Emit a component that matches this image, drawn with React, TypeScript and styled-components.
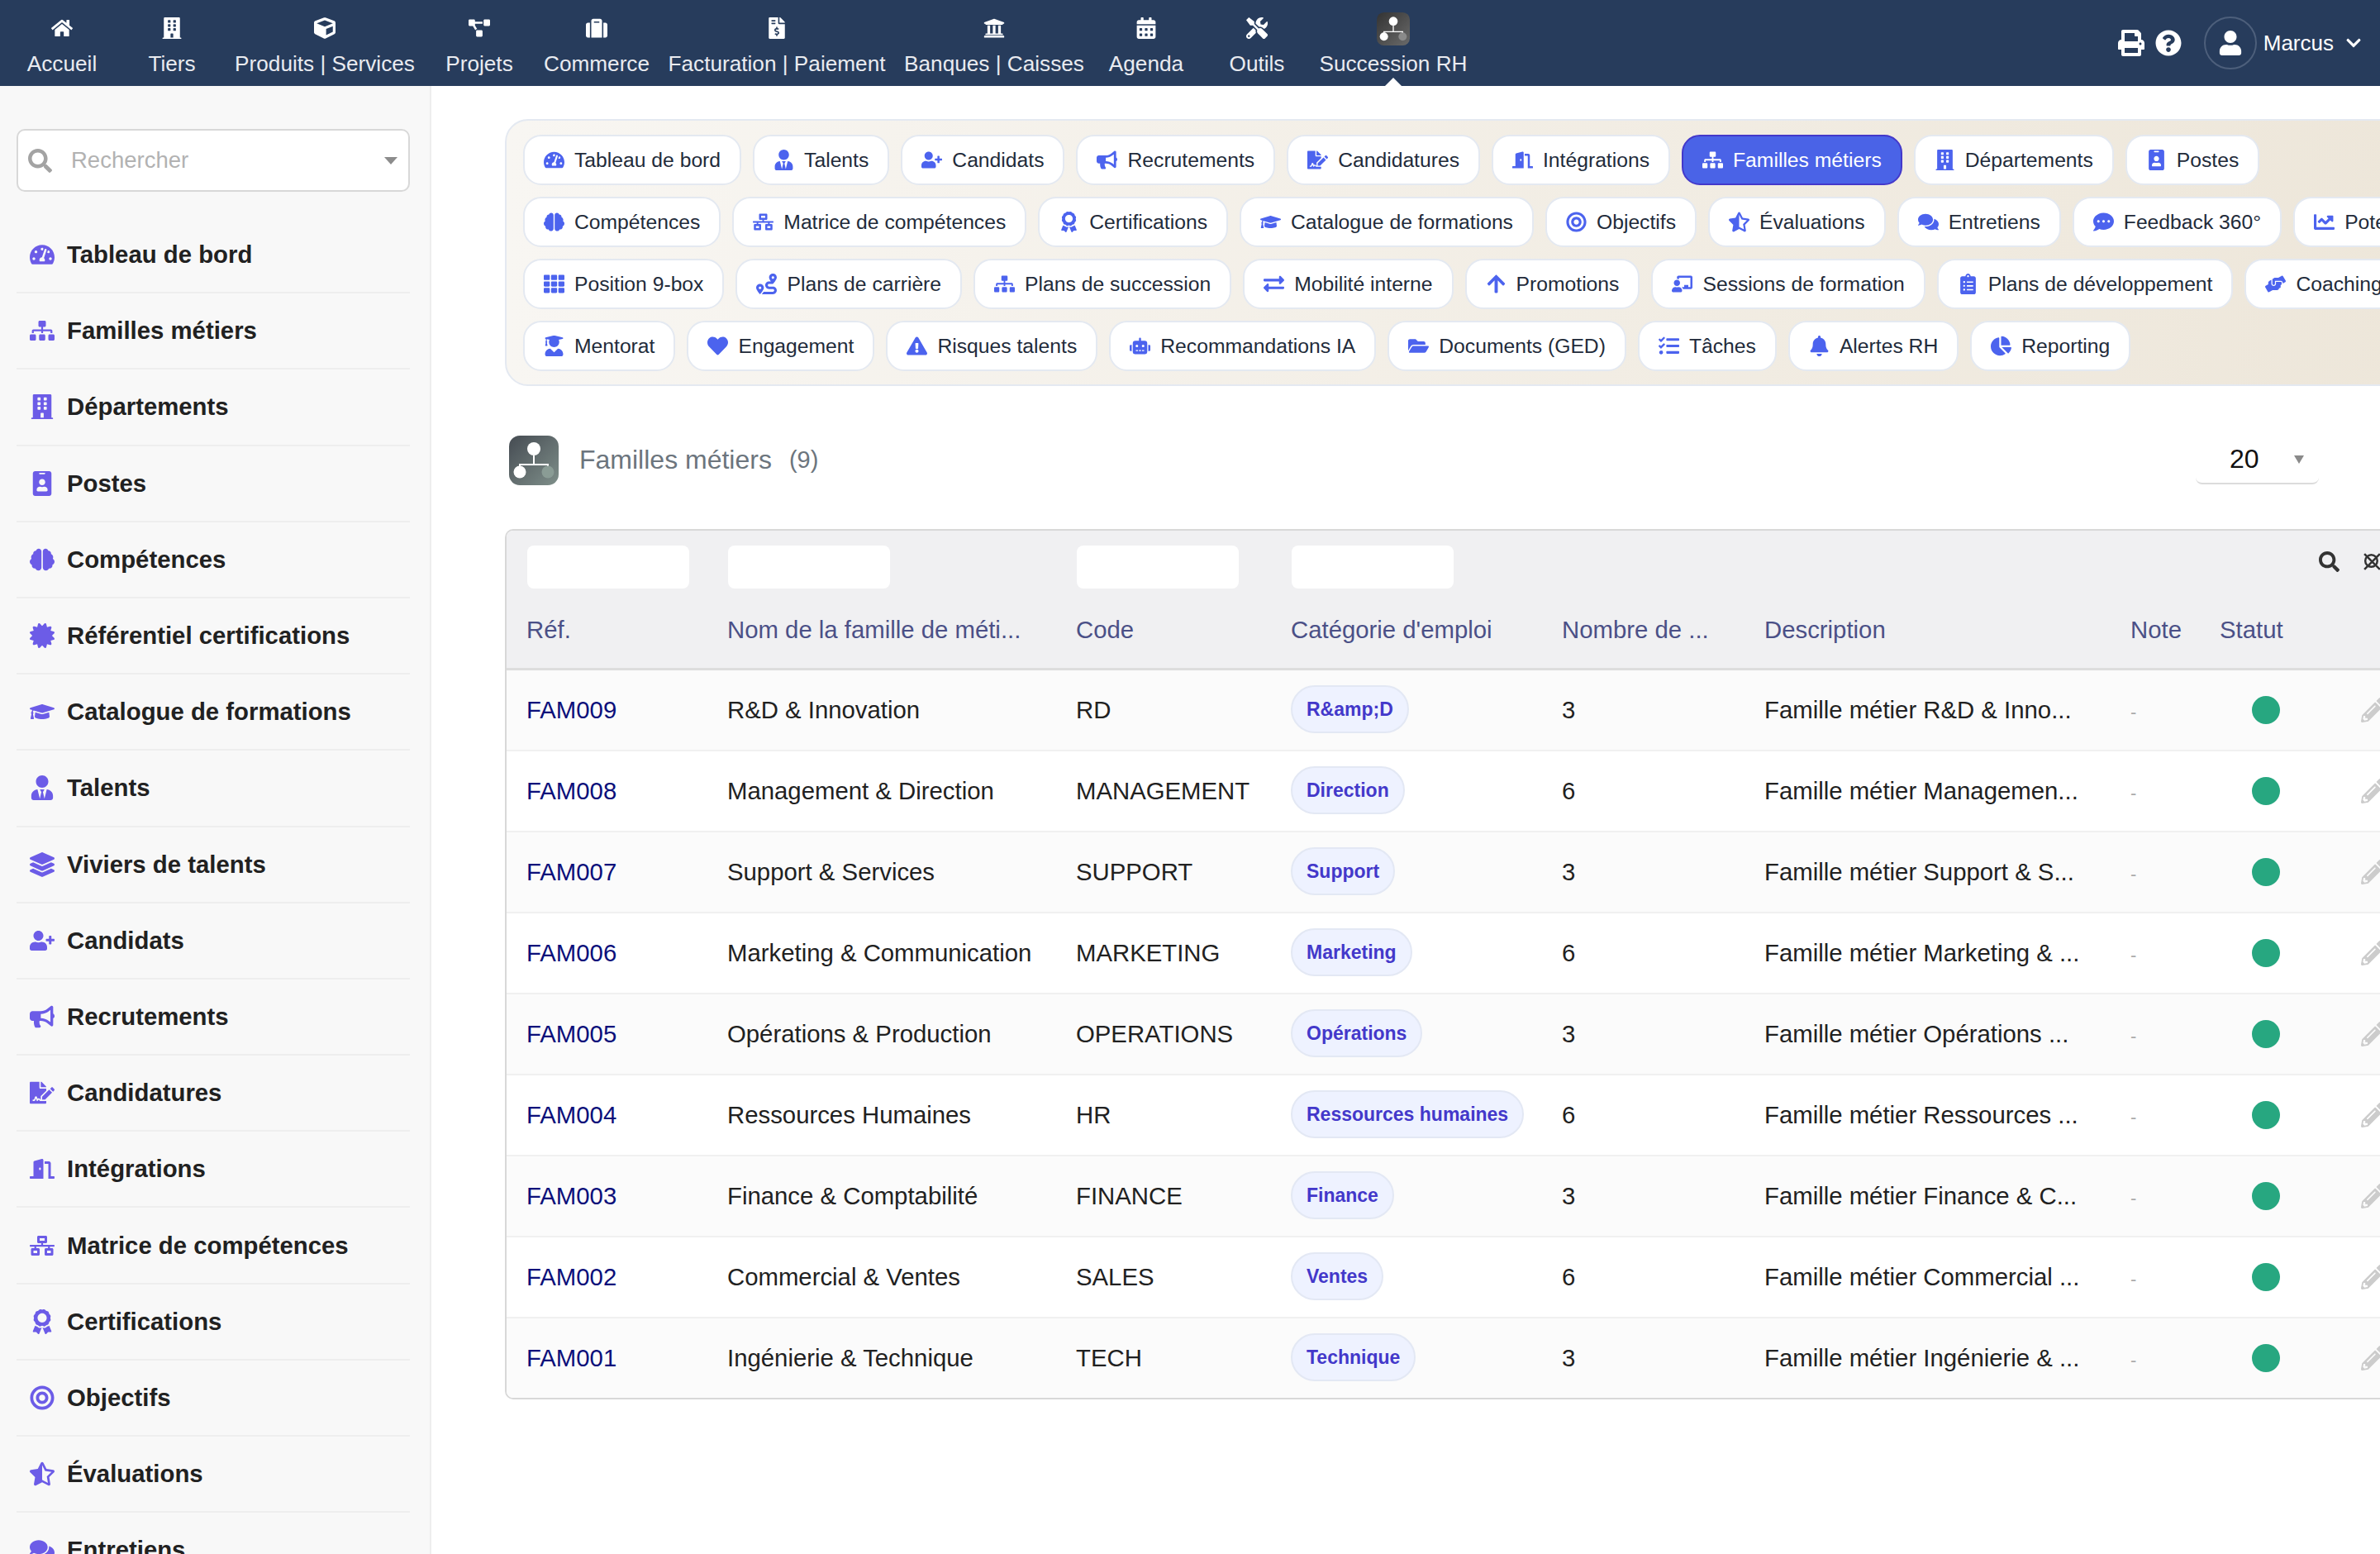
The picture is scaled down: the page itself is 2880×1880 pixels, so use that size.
import React from 'react'
import styled, { createGlobalStyle } from 'styled-components'
import {
  FaHome,
  FaBuilding,
  FaCube,
  FaProjectDiagram,
  FaSuitcase,
  FaFileInvoiceDollar,
  FaUniversity,
  FaCalendarAlt,
  FaTools,
  FaPrint,
  FaQuestionCircle,
  FaUser,
  FaChevronDown,
  FaSearch,
  FaTachometerAlt,
  FaSitemap,
  FaIdBadge,
  FaBrain,
  FaCertificate,
  FaGraduationCap,
  FaUserTie,
  FaLayerGroup,
  FaUserPlus,
  FaBullhorn,
  FaFileSignature,
  FaDoorOpen,
  FaNetworkWired,
  FaAward,
  FaBullseye,
  FaStarHalfAlt,
  FaComments,
  FaCommentDots,
  FaChartLine,
  FaTh,
  FaRoute,
  FaExchangeAlt,
  FaArrowUp,
  FaChalkboardTeacher,
  FaClipboardList,
  FaHandsHelping,
  FaUserGraduate,
  FaHeart,
  FaExclamationTriangle,
  FaRobot,
  FaFolderOpen,
  FaTasks,
  FaBell,
  FaChartPie,
  FaPencilAlt,
} from 'react-icons/fa'

const GlobalStyle = createGlobalStyle`
  html, body {
    margin: 0;
    padding: 0;
    width: 2880px;
    height: 1880px;
    overflow: hidden;
    background: #fff;
    font-family: 'Liberation Sans', Arial, sans-serif;
  }
  svg {
    display: block;
  }
`

const navItems = [
  { label: 'Accueil', icon: FaHome, w: 134 },
  { label: 'Tiers', icon: FaBuilding, w: 132 },
  { label: 'Produits | Services', icon: FaCube, w: 238 },
  { label: 'Projets', icon: FaProjectDiagram, w: 136 },
  { label: 'Commerce', icon: FaSuitcase, w: 148 },
  { label: 'Facturation | Paiement', icon: FaFileInvoiceDollar, w: 288 },
  { label: 'Banques | Caisses', icon: FaUniversity, w: 238 },
  { label: 'Agenda', icon: FaCalendarAlt, w: 130 },
  { label: 'Outils', icon: FaTools, w: 138 },
]

const sideItems = [
  { label: 'Tableau de bord', icon: FaTachometerAlt },
  { label: 'Familles métiers', icon: FaSitemap },
  { label: 'Départements', icon: FaBuilding },
  { label: 'Postes', icon: FaIdBadge },
  { label: 'Compétences', icon: FaBrain },
  { label: 'Référentiel certifications', icon: FaCertificate },
  { label: 'Catalogue de formations', icon: FaGraduationCap },
  { label: 'Talents', icon: FaUserTie },
  { label: 'Viviers de talents', icon: FaLayerGroup },
  { label: 'Candidats', icon: FaUserPlus },
  { label: 'Recrutements', icon: FaBullhorn },
  { label: 'Candidatures', icon: FaFileSignature },
  { label: 'Intégrations', icon: FaDoorOpen },
  { label: 'Matrice de compétences', icon: FaNetworkWired },
  { label: 'Certifications', icon: FaAward },
  { label: 'Objectifs', icon: FaBullseye },
  { label: 'Évaluations', icon: FaStarHalfAlt },
  { label: 'Entretiens', icon: FaComments },
]

const tabs = [
  { label: 'Tableau de bord', icon: FaTachometerAlt },
  { label: 'Talents', icon: FaUserTie },
  { label: 'Candidats', icon: FaUserPlus },
  { label: 'Recrutements', icon: FaBullhorn },
  { label: 'Candidatures', icon: FaFileSignature },
  { label: 'Intégrations', icon: FaDoorOpen },
  { label: 'Familles métiers', icon: FaSitemap, active: true },
  { label: 'Départements', icon: FaBuilding },
  { label: 'Postes', icon: FaIdBadge },
  { label: 'Compétences', icon: FaBrain },
  { label: 'Matrice de compétences', icon: FaNetworkWired },
  { label: 'Certifications', icon: FaAward },
  { label: 'Catalogue de formations', icon: FaGraduationCap },
  { label: 'Objectifs', icon: FaBullseye },
  { label: 'Évaluations', icon: FaStarHalfAlt },
  { label: 'Entretiens', icon: FaComments },
  { label: 'Feedback 360°', icon: FaCommentDots },
  { label: 'Potentiel', icon: FaChartLine },
  { label: 'Position 9-box', icon: FaTh },
  { label: 'Plans de carrière', icon: FaRoute },
  { label: 'Plans de succession', icon: FaSitemap },
  { label: 'Mobilité interne', icon: FaExchangeAlt },
  { label: 'Promotions', icon: FaArrowUp },
  { label: 'Sessions de formation', icon: FaChalkboardTeacher },
  { label: 'Plans de développement', icon: FaClipboardList },
  { label: 'Coaching', icon: FaHandsHelping },
  { label: 'Mentorat', icon: FaUserGraduate },
  { label: 'Engagement', icon: FaHeart },
  { label: 'Risques talents', icon: FaExclamationTriangle },
  { label: 'Recommandations IA', icon: FaRobot },
  { label: 'Documents (GED)', icon: FaFolderOpen },
  { label: 'Tâches', icon: FaTasks },
  { label: 'Alertes RH', icon: FaBell },
  { label: 'Reporting', icon: FaChartPie },
]

const rows = [
  ['FAM009', 'R&D & Innovation', 'RD', 'R&amp;D', '3', 'Famille métier R&D & Inno...'],
  ['FAM008', 'Management & Direction', 'MANAGEMENT', 'Direction', '6', 'Famille métier Managemen...'],
  ['FAM007', 'Support & Services', 'SUPPORT', 'Support', '3', 'Famille métier Support & S...'],
  ['FAM006', 'Marketing & Communication', 'MARKETING', 'Marketing', '6', 'Famille métier Marketing & ...'],
  ['FAM005', 'Opérations & Production', 'OPERATIONS', 'Opérations', '3', 'Famille métier Opérations ...'],
  ['FAM004', 'Ressources Humaines', 'HR', 'Ressources humaines', '6', 'Famille métier Ressources ...'],
  ['FAM003', 'Finance & Comptabilité', 'FINANCE', 'Finance', '3', 'Famille métier Finance & C...'],
  ['FAM002', 'Commercial & Ventes', 'SALES', 'Ventes', '6', 'Famille métier Commercial ...'],
  ['FAM001', 'Ingénierie & Technique', 'TECH', 'Technique', '3', 'Famille métier Ingénierie & ...'],
]

const colWidths = [243, 422, 260, 328, 245, 443, 108, 126, 193]

const Page = styled.div`
  width: 2880px;
  height: 1880px;
  display: flex;
  flex-direction: column;
  overflow: hidden;
`

const TopBar = styled.header`
  height: 104px;
  flex: none;
  background: #273c5c;
  display: flex;
  justify-content: space-between;
  padding-left: 8px;
  color: #e9ebf0;
`

const NavList = styled.nav`
  display: flex;
`

const NavItem = styled.a<{ $w: number }>`
  position: relative;
  width: ${p => p.$w}px;
  display: flex;
  flex-direction: column;
  align-items: center;
  font-size: 26.2px;
  white-space: nowrap;
  svg {
    height: 26px;
    width: auto;
    margin-top: 21px;
    margin-bottom: 15px;
    color: #fff;
  }
`

const ActiveNav = styled(NavItem)`
  svg {
    height: 40px;
    margin-top: 15px;
    margin-bottom: 7px;
    color: inherit;
  }
  &::after {
    content: '';
    position: absolute;
    left: 50%;
    bottom: 0;
    margin-left: -10px;
    border-left: 10px solid transparent;
    border-right: 10px solid transparent;
    border-bottom: 10px solid #fff;
  }
`

const TopRight = styled.div`
  display: flex;
  align-items: center;
  padding-right: 22px;
  color: #fff;
`

const TopIcon = styled.span`
  font-size: 32px;
  margin-right: 13px;
  svg {
    height: 1em;
    width: auto;
  }
`

const Avatar = styled.span`
  width: 64px;
  height: 64px;
  box-sizing: border-box;
  border: 2px solid #4d5f7b;
  border-radius: 50%;
  margin-left: 14px;
  display: flex;
  align-items: center;
  justify-content: center;
  font-size: 30px;
`

const UserName = styled.span`
  font-size: 26px;
  margin-left: 8px;
  margin-right: 14px;
`

const Body = styled.div`
  flex: 1;
  display: flex;
  min-height: 0;
`

const Sidebar = styled.aside`
  width: 520px;
  flex: none;
  box-sizing: content-box;
  background: #f8f8f8;
  border-right: 2px solid #eeeeee;
  padding: 52px 0 0;
  overflow: hidden;
`

const SearchBox = styled.div`
  margin: 0 24px 0 20px;
  height: 76px;
  box-sizing: border-box;
  background: #fff;
  border: 2px solid #d8d8d8;
  border-radius: 10px;
  display: flex;
  align-items: center;
  padding: 0 13px 0 12px;
  color: #a3a3a3;
  font-size: 27.5px;
  svg {
    font-size: 29px;
    margin-right: 23px;
  }
`

const Placeholder = styled.span`
  flex: 1;
  color: #b2b2b2;
`

const Caret = styled.span`
  border-left: 8px solid transparent;
  border-right: 8px solid transparent;
  border-top: 9px solid #8c8c8c;
`

const SideList = styled.ul`
  list-style: none;
  margin: 31px 24px 0 20px;
  padding: 0;
`

const SideRow = styled.li`
  height: 92.2px;
  box-sizing: border-box;
  border-bottom: 2px solid #eeeeee;
  display: flex;
  align-items: center;
  padding-left: 16px;
  font-size: 29.33px;
  font-weight: 700;
  color: #212121;
`

const SideIcon = styled.span`
  width: 45px;
  flex: none;
  font-size: 30px;
  color: #6c5ce7;
  svg {
    height: 1em;
    width: auto;
  }
`

const Main = styled.main`
  flex: 1;
  min-width: 0;
  overflow: hidden;
  padding: 40px 0 0 89px;
`

const Content = styled.div`
  width: 2370px;
`

const TabPanel = styled.div`
  box-sizing: border-box;
  height: 323px;
  border: 2px solid #e4e9f1;
  border-radius: 28px;
  background: linear-gradient(90deg, #f8f6f2 0%, #ede6d9 100%);
  padding: 17px 20px;
  display: flex;
  flex-wrap: wrap;
  align-content: flex-start;
  gap: 14px;
`

const Tab = styled.a<{ $active?: boolean }>`
  height: 61px;
  box-sizing: border-box;
  display: flex;
  align-items: center;
  gap: 12px;
  padding: 0 23px;
  border: 2px solid ${p => (p.$active ? '#4338ca' : '#e4e9f1')};
  border-radius: 22px;
  background: ${p => (p.$active ? '#4a63e7' : '#fff')};
  color: ${p => (p.$active ? '#fff' : '#222b3a')};
  font-size: 24.7px;
  white-space: nowrap;
  svg {
    height: 25px;
    width: auto;
    color: ${p => (p.$active ? '#fff' : '#4c63ee')};
  }
`

const Heading = styled.div`
  display: flex;
  justify-content: space-between;
  align-items: center;
  margin: 59px 175px 53px 5px;
  height: 61px;
`

const TitleGroup = styled.div`
  display: flex;
  align-items: center;
  color: #6c757d;
`

const Title = styled.h1`
  margin: 0 21px 0 25px;
  font-size: 32px;
  font-weight: 400;
`

const Count = styled.span`
  font-size: 29px;
`

const PageSize = styled.div`
  width: 149px;
  height: 58px;
  box-sizing: border-box;
  border-bottom: 2px solid #dcdcdc;
  border-radius: 0 0 8px 8px;
  display: flex;
  align-items: center;
  padding: 0 18px 0 41px;
  justify-content: space-between;
  font-size: 32px;
  color: #111;
`

const SmallCaret = styled.span`
  border-left: 6px solid transparent;
  border-right: 6px solid transparent;
  border-top: 10px solid #8a8a8a;
`

const TableFrame = styled.div`
  box-sizing: border-box;
  border: 2px solid #d8d8d8;
  border-right: 0;
  border-radius: 10px 0 0 10px;
  overflow: hidden;
`

const DataTable = styled.table`
  width: 2368px;
  table-layout: fixed;
  border-collapse: separate;
  border-spacing: 0;
  font-size: 29.33px;
  color: #212121;
`

const HeadRow = styled.tr`
  background: #f0f0f2;
`

const FilterCell = styled.td`
  height: 78px;
  padding: 18px 0 0 25px;
  box-sizing: border-box;
  vertical-align: top;
`

const FilterInput = styled.input`
  display: block;
  width: 196px;
  height: 52px;
  box-sizing: border-box;
  border: 0;
  border-radius: 8px;
  background: #fff;
  padding: 0;
`

const ToolCell = styled.td`
  padding: 25px 0 0 18px;
  vertical-align: top;
  color: #333;
`

const ToolIcons = styled.div`
  display: flex;
  gap: 27px;
  font-size: 25px;
`

const HeadCell = styled.th`
  height: 91px;
  box-sizing: border-box;
  border-bottom: 3px solid #dddddd;
  padding: 0 0 4px 24px;
  text-align: left;
  font-weight: 400;
  color: #4b5087;
  white-space: nowrap;
`

const BodyRow = styled.tr`
  background: #fbfbfb;
  &:nth-child(even) {
    background: #fff;
  }
  &:last-child td {
    border-bottom: 0;
    height: 96px;
  }
`

const Cell = styled.td`
  height: 98px;
  box-sizing: border-box;
  border-bottom: 2px solid #f0f0f0;
  padding: 0 0 0 24px;
  white-space: nowrap;
`

const RefLink = styled.a`
  color: #0b0f7a;
`

const Badge = styled.span`
  display: inline-flex;
  align-items: center;
  height: 58px;
  box-sizing: border-box;
  padding: 0 17px;
  border: 2px solid #e3e8f4;
  border-radius: 29px;
  background: #eef2ff;
  color: #4338ca;
  font-size: 23px;
  font-weight: 700;
  position: relative;
  top: -1px;
`

const Dash = styled.span`
  color: #aaaaaa;
  font-size: 22px;
`

const StatusDot = styled.span`
  display: block;
  width: 34px;
  height: 34px;
  border-radius: 50%;
  background: #27a780;
  margin-left: 39px;
`

const EditIcon = styled.span`
  display: block;
  margin-left: 45px;
  font-size: 30px;
  color: #cccccc;
`

const TEAL_GRADIENT = (id: string, from: string, to: string) => (
  <linearGradient id={id} x1='0' y1='0' x2='1' y2='1'>
    <stop offset='0' stopColor={from} />
    <stop offset='1' stopColor={to} />
  </linearGradient>
)

const OrgBadge = ({ id, from, to, last }: { id: string; from: string; to: string; last: string }) => (
  <svg viewBox='0 0 60 60' width='60' height='60'>
    <defs>{TEAL_GRADIENT(id, from, to)}</defs>
    <rect width='60' height='60' rx='13' fill={`url(#${id})`} />
    <circle cx='30' cy='16' r='8' fill='#fff' />
    <path d='M30 24v11M13 44v-9h34v9' fill='none' stroke='#fff' strokeWidth='2' />
    <circle cx='13' cy='44' r='7.5' fill='#fff' />
    <circle cx='47' cy='44' r='7.5' fill={last} />
  </svg>
)

const ClearFilterIcon = () => (
  <svg viewBox='0 0 24 24' width='25' height='25' fill='none' stroke='#333' strokeWidth='2.4'>
    <circle cx='11' cy='11' r='7' />
    <path d='M3 3l18 18M21 3L3 21' />
  </svg>
)

const App = () => {
  return (
    <Page>
      <GlobalStyle />
      <TopBar>
        <NavList>
          {navItems.map(item => {
            const Icon = item.icon
            return (
              <NavItem key={item.label} $w={item.w}>
                <Icon />
                {item.label}
              </NavItem>
            )
          })}
          <ActiveNav $w={192}>
            <OrgBadge id='nav-badge' from='#333333' to='#6a6a6a' last='#8a8a8a' />
            Succession RH
          </ActiveNav>
        </NavList>
        <TopRight>
          <TopIcon>
            <FaPrint />
          </TopIcon>
          <TopIcon>
            <FaQuestionCircle />
          </TopIcon>
          <Avatar>
            <FaUser />
          </Avatar>
          <UserName>Marcus</UserName>
          <FaChevronDown size={20} />
        </TopRight>
      </TopBar>
      <Body>
        <Sidebar>
          <SearchBox>
            <FaSearch />
            <Placeholder>Rechercher</Placeholder>
            <Caret />
          </SearchBox>
          <SideList>
            {sideItems.map(item => {
              const Icon = item.icon
              return (
                <SideRow key={item.label}>
                  <SideIcon>
                    <Icon />
                  </SideIcon>
                  {item.label}
                </SideRow>
              )
            })}
          </SideList>
        </Sidebar>
        <Main>
          <Content>
            <TabPanel>
              {tabs.map(tab => {
                const Icon = tab.icon
                return (
                  <Tab key={tab.label} $active={tab.active}>
                    <Icon />
                    {tab.label}
                  </Tab>
                )
              })}
            </TabPanel>
            <Heading>
              <TitleGroup>
                <OrgBadge id='title-badge' from='#454b52' to='#7f8f8a' last='#8a9c95' />
                <Title>Familles métiers</Title>
                <Count>(9)</Count>
              </TitleGroup>
              <PageSize>
                20
                <SmallCaret />
              </PageSize>
            </Heading>
            <TableFrame>
              <DataTable>
                <colgroup>
                  {colWidths.map((w, i) => (
                    <col key={i} width={w} />
                  ))}
                </colgroup>
                <thead>
                  <HeadRow>
                    <FilterCell>
                      <FilterInput />
                    </FilterCell>
                    <FilterCell>
                      <FilterInput />
                    </FilterCell>
                    <FilterCell>
                      <FilterInput />
                    </FilterCell>
                    <FilterCell>
                      <FilterInput />
                    </FilterCell>
                    <td />
                    <td />
                    <td />
                    <td />
                    <ToolCell>
                      <ToolIcons>
                        <FaSearch />
                        <ClearFilterIcon />
                      </ToolIcons>
                    </ToolCell>
                  </HeadRow>
                  <HeadRow>
                    <HeadCell>Réf.</HeadCell>
                    <HeadCell>Nom de la famille de méti...</HeadCell>
                    <HeadCell>Code</HeadCell>
                    <HeadCell>Catégorie d'emploi</HeadCell>
                    <HeadCell>Nombre de ...</HeadCell>
                    <HeadCell>Description</HeadCell>
                    <HeadCell>Note</HeadCell>
                    <HeadCell>Statut</HeadCell>
                    <HeadCell />
                  </HeadRow>
                </thead>
                <tbody>
                  {rows.map(r => (
                    <BodyRow key={r[0]}>
                      <Cell>
                        <RefLink>{r[0]}</RefLink>
                      </Cell>
                      <Cell>{r[1]}</Cell>
                      <Cell>{r[2]}</Cell>
                      <Cell>
                        <Badge>{r[3]}</Badge>
                      </Cell>
                      <Cell>{r[4]}</Cell>
                      <Cell>{r[5]}</Cell>
                      <Cell>
                        <Dash>-</Dash>
                      </Cell>
                      <Cell>
                        <StatusDot />
                      </Cell>
                      <Cell>
                        <EditIcon>
                          <FaPencilAlt />
                        </EditIcon>
                      </Cell>
                    </BodyRow>
                  ))}
                </tbody>
              </DataTable>
            </TableFrame>
          </Content>
        </Main>
      </Body>
    </Page>
  )
}

export default App
